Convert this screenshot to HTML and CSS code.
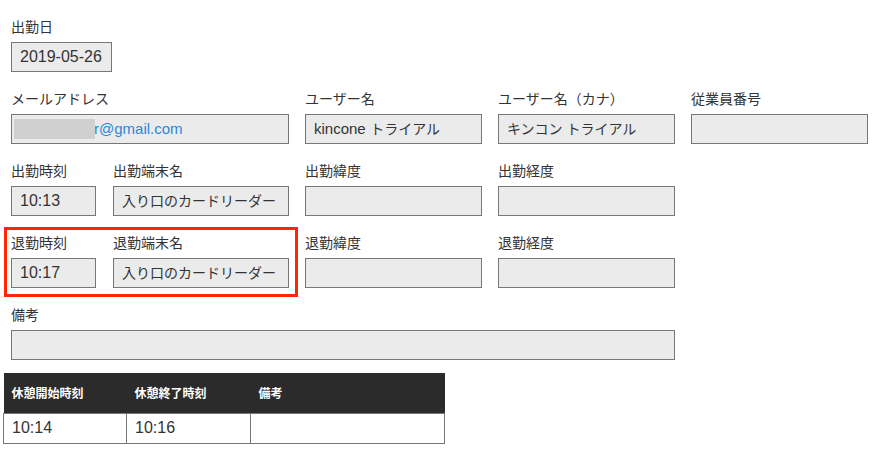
FILE: index.html
```html
<!DOCTYPE html>
<html lang="ja">
<head>
<meta charset="utf-8">
<title>出勤記録</title>
<link rel="stylesheet" href="styles.css">
</head>
<body>
<div class="page">
  <div class="row">
    <div class="field w-date">
      <div class="label">出勤日</div>
      <div class="box">2019-05-26</div>
    </div>
  </div>

  <div class="row">
    <div class="field w-wide">
      <div class="label">メールアドレス</div>
      <div class="box email"><span class="mask"></span>r@gmail.com</div>
    </div>
    <div class="field w-col">
      <div class="label">ユーザー名</div>
      <div class="box"><span class="lat">kincone</span> <span class="ja">トライアル</span></div>
    </div>
    <div class="field w-col">
      <div class="label">ユーザー名（カナ）</div>
      <div class="box"><span class="ja">キンコン トライアル</span></div>
    </div>
    <div class="field w-col">
      <div class="label">従業員番号</div>
      <div class="box"></div>
    </div>
  </div>

  <div class="row">
    <div class="pair">
      <div class="field w-time">
        <div class="label">出勤時刻</div>
        <div class="box">10:13</div>
      </div>
      <div class="field w-term">
        <div class="label">出勤端末名</div>
        <div class="box"><span class="ja">入り口のカードリーダー</span></div>
      </div>
    </div>
    <div class="field w-col">
      <div class="label">出勤緯度</div>
      <div class="box"></div>
    </div>
    <div class="field w-col">
      <div class="label">出勤経度</div>
      <div class="box"></div>
    </div>
  </div>

  <div class="row">
    <div class="pair highlight">
      <div class="field w-time">
        <div class="label">退勤時刻</div>
        <div class="box">10:17</div>
      </div>
      <div class="field w-term">
        <div class="label">退勤端末名</div>
        <div class="box"><span class="ja">入り口のカードリーダー</span></div>
      </div>
    </div>
    <div class="field w-col">
      <div class="label">退勤緯度</div>
      <div class="box"></div>
    </div>
    <div class="field w-col">
      <div class="label">退勤経度</div>
      <div class="box"></div>
    </div>
  </div>

  <div class="row">
    <div class="field w-note">
      <div class="label">備考</div>
      <div class="box"></div>
    </div>
  </div>

  <table class="breaks">
    <colgroup>
      <col class="c1"><col class="c2"><col class="c3">
    </colgroup>
    <thead>
      <tr><th>休憩開始時刻</th><th>休憩終了時刻</th><th>備考</th></tr>
    </thead>
    <tbody>
      <tr><td>10:14</td><td>10:16</td><td></td></tr>
    </tbody>
  </table>
</div>
</body>
</html>
```

FILE: styles.css
```css
* {
  box-sizing: border-box;
}

html, body {
  margin: 0;
  padding: 0;
  background: #ffffff;
}

body {
  font-family: "Liberation Sans", "Noto Sans CJK JP", sans-serif;
  color: #333333;
}

.page {
  padding: 17px 0 0 11px;
  display: flex;
  flex-direction: column;
  gap: 17px;
}

.row {
  display: flex;
  gap: 16px;
  align-items: flex-start;
}

.pair {
  display: flex;
  gap: 17px;
}

.highlight {
  border: 3px solid #ff2600;
  margin: -6px -9px -9px -7px;
  padding: 3px 6px 6px 4px;
}

.field {
  display: flex;
  flex-direction: column;
}

.label {
  font-size: 14px;
  line-height: 20px;
  height: 20px;
  margin-bottom: 5px;
  white-space: nowrap;
  color: #333333;
}

.box {
  height: 30px;
  border: 1px solid #777777;
  background: #ebebeb;
  font-size: 16px;
  line-height: 28px;
  padding: 0 8px;
  white-space: nowrap;
  overflow: hidden;
  color: #333333;
}

.box .ja {
  font-size: 14px;
}

.box .lat {
  font-size: 15px;
}

.w-date { width: 101px; }
.w-wide { width: 278px; }
.w-col { width: 177px; }
.w-time { width: 85px; }
.w-term { width: 176px; }
.w-note { width: 664px; }

.email {
  color: #2b87d8;
  font-size: 15px;
}

.mask {
  display: inline-block;
  position: relative;
  z-index: 1;
  width: 81px;
  height: 20px;
  margin: 0 -1px 0 -6px;
  vertical-align: -5px;
  background: #d0d0d0;
}

.breaks {
  margin: -4px 0 0 -8px;
  width: 441px;
  border-collapse: collapse;
  table-layout: fixed;
}

.breaks .c1 { width: 123px; }
.breaks .c2 { width: 124px; }
.breaks .c3 { width: 194px; }

.breaks th {
  height: 40px;
  background: #2b2b2b;
  color: #ffffff;
  font-size: 12px;
  font-weight: bold;
  text-align: left;
  padding: 0 8px;
  border: none;
}

.breaks td {
  height: 30px;
  border: 1px solid #777777;
  font-size: 16px;
  padding: 0 8px;
  color: #333333;
}
```
